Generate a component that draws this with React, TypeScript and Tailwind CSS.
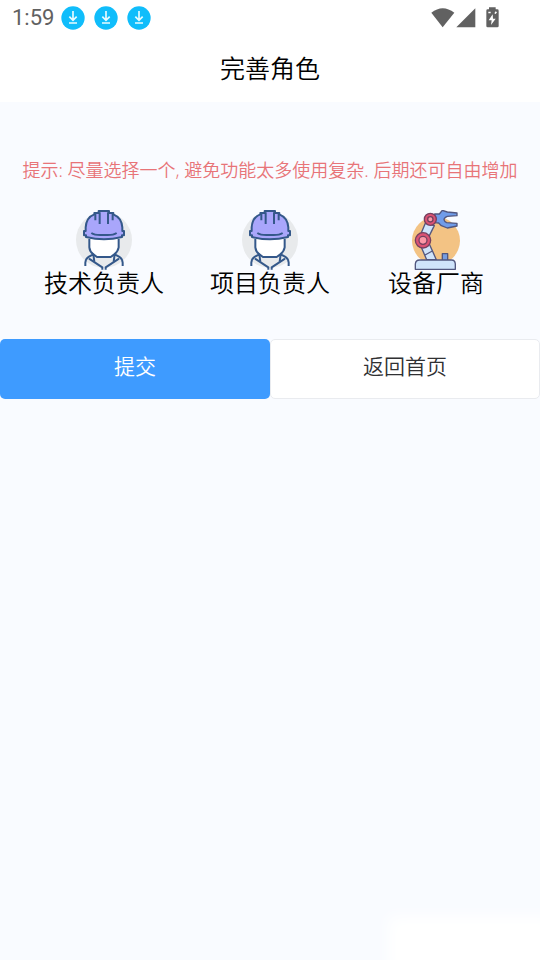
import { useState } from "react";

function DownloadBadge() {
  return (
    <svg viewBox="0 0 72 72" className="size-6" fill="none">
      <circle cx="36" cy="36" r="35" fill="#10bdfb" />
      <path d="M36 15v27M25 32l11 11 11-11M24 51h24" stroke="#e8fbff" strokeWidth="5" />
    </svg>
  );
}

function StatusBar() {
  return (
    <div className="flex h-9 items-center justify-between pl-3 pr-[41px] text-[#616161]">
      <div className="flex items-center gap-[9px]">
        <span className="mr-[-2px] font-[Roboto,sans-serif] text-[22px] leading-9 font-normal">1:59</span>
        <DownloadBadge />
        <DownloadBadge />
        <DownloadBadge />
      </div>
      <svg viewBox="32 20 204 66" className="h-[22px] w-[68px]" fill="currentColor">
        <path d="M33 37Q67 10 102 37L67 81Z" />
        <path d="M165 24V81H108Z" />
        <path d="M206 21h20v6h5q4 0 4 4v46q0 4-4 4h-29q-4 0-4-4V31q0-4 4-4h4Z" />
        <path d="M217 42l-12 18h9l-2 14 14-19h-8ZM204 34h7v5h-7ZM226 33l4 3-4 5-4-2Z" fill="#fff" />
      </svg>
    </div>
  );
}

function WorkerIcon() {
  return (
    <svg viewBox="30 30 180 180" className="size-[60px]" fill="none">
      <circle cx="120" cy="120" r="84" fill="#e8eaec" />
      <path d="M76 116V143Q78 155 88 163L99 171H140L151 163Q162 154 164 142V116Z" fill="#fff" />
      <g stroke="#34588a" strokeWidth="6" strokeLinejoin="round">
        <path
          d="M65 93V82Q67 52 91 43V39H104V33H135V39H148V43Q173 53 175 82V93H180V106H174V111Q146 118 120 118T66 111V106H60V93Z"
          fill="#a9a6fb"
        />
        <path d="M107 37V72M132 37V72M94 42V61M146 42V61" />
        <path d="M82 99Q91 105 109 105H131Q149 105 158 99" />
        <path d="M76 117V142Q77 154 88 163L99 171H140L151 163Q162 154 164 142V117" />
        <path d="M64 198V188Q65 176 75 170L88 163L91 185M176 198V188Q175 176 165 170L152 163L149 185" />
        <path d="M75 176L115 202V209M165 176L125 202V209" />
      </g>
    </svg>
  );
}

function RobotArmIcon() {
  return (
    <svg viewBox="18 30 180 180" className="size-[60px]" fill="none">
      <circle cx="108" cy="122" r="72" fill="#f3c384" />
      <g stroke="#52577f" strokeWidth="4" strokeLinejoin="round">
        <path d="M76 70L60 108L84 115L103 77Z" fill="#cfe4fb" />
        <path d="M62 137L80 179H109L88 132Z" fill="#cfe4fb" />
        <path d="M75 165L97 153" />
        <path d="M127 180V161H143V180" fill="#769de2" />
        <path d="M46 208V192Q47 180 59 180H155Q165 180 166 192V208Z" fill="#cfe4fb" />
        <path
          d="M104 42H118L127 31L142 36L171 39V47L142 49Q132 53 132 59Q133 65 140 68L171 70V78L142 84L124 77L116 69L105 68Z"
          fill="#709ce9"
        />
      </g>
      <g stroke="#75405f" strokeWidth="4">
        <circle cx="91" cy="58" r="18" fill="#dc5274" />
        <circle cx="91" cy="58" r="8" fill="#fa9aaa" />
        <circle cx="69" cy="121" r="23" fill="#dc5274" />
        <circle cx="69" cy="121" r="12" fill="#fc98a7" />
      </g>
    </svg>
  );
}

const roles = [
  { name: "技术负责人", Icon: WorkerIcon },
  { name: "项目负责人", Icon: WorkerIcon },
  { name: "设备厂商", Icon: RobotArmIcon },
];

export default function App() {
  const [selected, setSelected] = useState<string | null>(null);

  return (
    <div className="relative min-h-screen overflow-hidden bg-[#f9fbff] font-['Noto_Sans_CJK_SC',sans-serif] font-[350] text-black">
      <header className="bg-white">
        <StatusBar />
        <h1 className="pb-1 text-center text-[25px] leading-[62px] font-[350]">完善角色</h1>
      </header>

      <main className="pt-14">
        <p className="text-center font-['Noto_Sans','Noto_Sans_CJK_SC',sans-serif] text-[18px] leading-6 text-[#e87478]">
          提示: 尽量选择一个, 避免功能太多使用复杂. 后期还可自由增加
        </p>

        <div className="mt-7 grid grid-cols-3 px-[21px]">
          {roles.map(({ name, Icon }) => (
            <button
              key={name}
              type="button"
              aria-pressed={selected === name}
              onClick={() => setSelected(name)}
              className="flex flex-col items-center"
            >
              <Icon />
              <span className="text-2xl leading-6">{name}</span>
            </button>
          ))}
        </div>

        <div className="mt-[45px] grid grid-cols-2 text-[21px]">
          <button type="button" className="h-15 rounded-[5px] bg-[#3e9bff] pb-[6px] text-white">
            提交
          </button>
          <button type="button" className="h-15 rounded-[5px] border border-[#e9ebef] bg-white pb-[6px] text-[#303133]">
            返回首页
          </button>
        </div>
      </main>

      <div className="absolute -bottom-4 -right-4 h-15 w-42 bg-white blur-[8px]" />
    </div>
  );
}
